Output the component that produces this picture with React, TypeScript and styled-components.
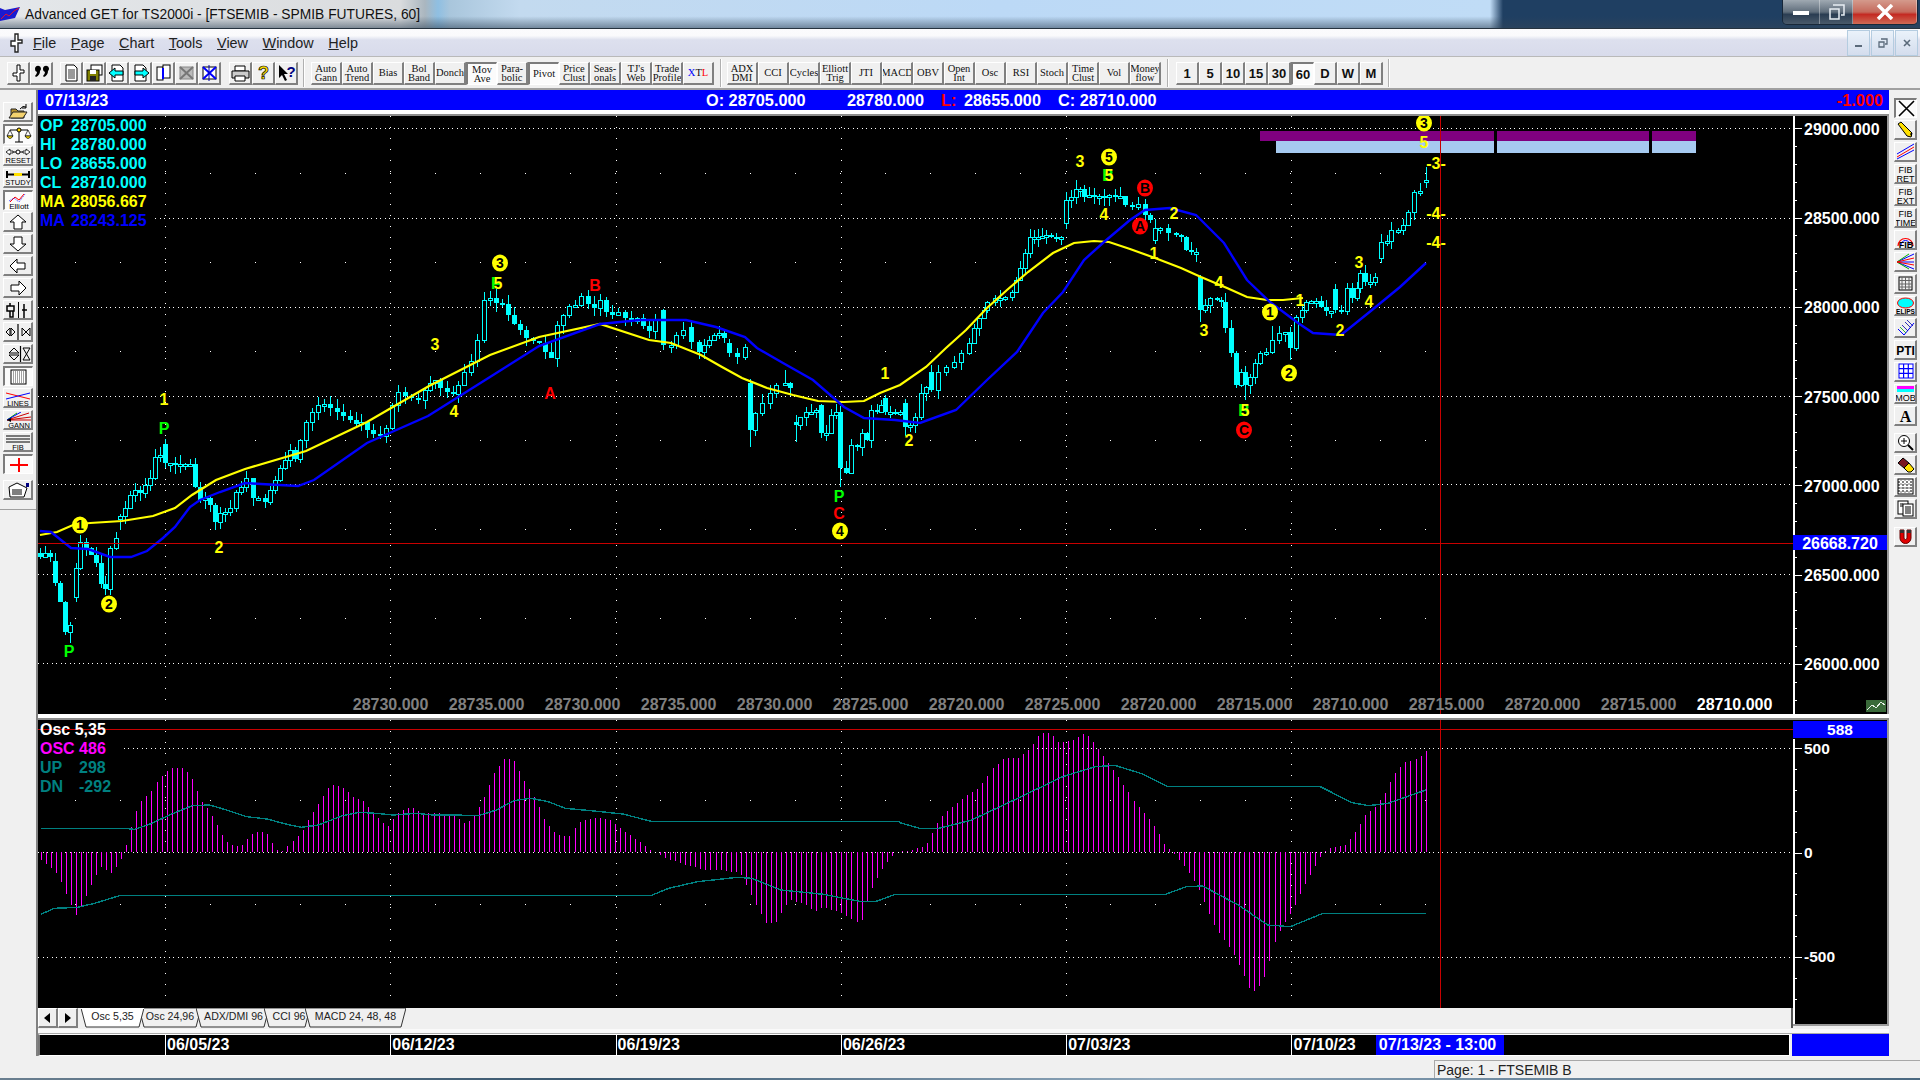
import React from 'react';
import styled, { createGlobalStyle } from 'styled-components';

const Global = createGlobalStyle`
  html, body { margin: 0; padding: 0; background: #f0f0f0; overflow: hidden; }
  * { box-sizing: border-box; }
  svg { display: block; }
  svg text { font-family: "Liberation Sans", Arial, sans-serif; }
`;

const SANS = '"Liberation Sans", Arial, sans-serif';
const SERIF = '"Liberation Serif", "Times New Roman", serif';

/* ---------- page frame ---------- */
const Page = styled.div`
  width: 1920px; height: 1080px; display: flex; flex-direction: column;
  font-family: ${SANS}; background: #f0f0f0; overflow: hidden;
`;
const TitleBar = styled.header`
  height: 29px; flex: none; display: flex; align-items: flex-start; justify-content: space-between;
  border-bottom: 1px solid #26333f;
  background:
    linear-gradient(180deg, rgba(40,60,80,0) 58%, rgba(50,70,90,.55) 100%),
    linear-gradient(90deg, #e4e7ea 0, #dadcde 400px, #aab6bf 425px, #8fbfe2 438px, #a9c6dc 450px, #c3daef 520px, #bcd9f6 1000px, #c0dcf6 1490px, #1f3f62 1503px, #1f3f62 1920px);
`;
const TitleLeft = styled.div`display: flex; align-items: center; height: 28px; gap: 4px; padding-left: 0;`;
const TitleText = styled.span`font-size: 13.8px; color: #111; white-space: nowrap;`;
const WinControls = styled.div`
  display: flex; height: 25px; margin-right: 2px; border: 1px solid rgba(20,30,40,.7); border-top: 0;
  border-radius: 0 0 5px 5px; overflow: hidden;
`;
const WinBtn = styled.div<{ $w: number; $close?: boolean }>`
  width: ${p => p.$w}px; display: flex; align-items: center; justify-content: center;
  border-right: 1px solid rgba(255,255,255,.35);
  background: ${p => p.$close
    ? 'linear-gradient(180deg, #d49a8c 0, #c56a5c 50%, #c42a22 60%, #cf6a55 100%)'
    : 'linear-gradient(180deg, #9fa9b2 0, #5f6d7b 50%, #2a3d52 60%, #4a5a6a 100%)'};
`;
const MenuBar = styled.nav`
  height: 28px; flex: none; display: flex; align-items: center; padding-left: 8px;
  background: linear-gradient(180deg, #fbfbfd 0, #fafafc 25%, #dde0ee 40%, #d8dbeb 100%);
  border-bottom: 1px solid #b9b9b9; position: relative;
`;
const MenuItems = styled.div`display: flex; gap: 14.6px; margin-left: 6px;`;
const MenuItem = styled.span`font-size: 14.4px; color: #222; white-space: nowrap;`;
const MenuKey = styled.span`text-decoration: underline;`;
const MdiControls = styled.div`margin-left: auto; margin-right: 2px; display: flex; gap: 1px; align-self: flex-start; margin-top: 1px;`;
const MdiBtn = styled.div`
  width: 23px; height: 26px; display: flex; align-items: center; justify-content: center;
  background: linear-gradient(180deg, #eaf2fa, #d4dded); border: 1px solid #b4cce0;
`;
const ToolBar = styled.div`
  height: 33px; flex: none; display: flex; align-items: flex-start; padding: 5px 0 0 7px; background: #f0f0f0;
  border-bottom: 2px solid #a0a0a0;
`;
const Group = styled.div<{ $ml?: number }>`display: flex; margin-left: ${p => p.$ml ?? 0}px;`;
const Sep = styled.div<{ $ml: number; $mr?: number }>`
  width: 2px; height: 28px; margin: -3px ${p => p.$mr ?? 0}px 0 ${p => p.$ml}px;
  border-left: 1px solid #b0b0b0; border-right: 1px solid #fff;
`;
const bevel = (pressed?: boolean) => pressed
  ? `background: #fbfbfb; border-top: 2px solid #7c7c7c; border-left: 2px solid #7c7c7c; border-bottom: 1px solid #fff; border-right: 1px solid #fff;`
  : `background: #f0f0f0; border-top: 1px solid #fff; border-left: 1px solid #fff; border-bottom: 2px solid #808080; border-right: 2px solid #808080;`;
const TBtn = styled.div<{ $w: number; $on?: boolean }>`
  width: ${p => p.$w}px; height: 23px; flex: none; display: flex; align-items: center; justify-content: center;
  ${p => bevel(p.$on)}
  font-family: ${SERIF}; font-size: 10.5px; line-height: 9.5px; color: #111; text-align: center; white-space: pre-line; overflow: hidden;
`;
const NumBtn = styled(TBtn)`font-family: ${SANS}; font-size: 13px; font-weight: bold; line-height: 13px; color: #111;`;
const Blue = styled.span`color: #0000ff;`;
const Red = styled.span`color: #ff0000;`;

const Body = styled.main`height: 966px; flex: none; display: flex;`;
const LeftTools = styled.aside`
  width: 38px; flex: none; display: flex; flex-direction: column; gap: 2px; padding: 12px 0 0 3px; background: #f0f0f0;
  border-right: 2px solid #808080; position: relative;
`;
const SideBtn = styled.div<{ $on?: boolean; $mt?: number; $w: number }>`
  width: ${p => p.$w}px; height: 20px; flex: none; display: flex; align-items: center; justify-content: center;
  margin-top: ${p => p.$mt ?? 0}px; ${p => bevel(p.$on)}
`;
const LeftDivider = styled.div`width: 36px; height: 1px; background: #a0a0a0; margin: 7px 0 0 -3px; flex: none;`;
const Center = styled.section`width: 1851px; flex: none; display: flex; flex-direction: column;`;
const RightTools = styled.aside`
  width: 31px; flex: none; display: flex; flex-direction: column; gap: 2px; padding: 8px 0 0 5px; background: #f0f0f0;
`;
const InfoBar = styled.div`
  height: 20px; flex: none; display: flex; align-items: center; background: #0000ff; color: #fff;
  font-size: 16.3px; font-weight: bold; padding: 1px 6px 0 7px; white-space: nowrap;
`;
const InfoItem = styled.span<{ $w: number }>`width: ${p => p.$w}px; flex: none;`;
const InfoEnd = styled.span`margin-left: auto; color: #ff0000;`;
const Rule = styled.div`
  height: 6px; flex: none; background: #fff; border-bottom: 2px solid #8c8c8c;
`;
const ChartRow = styled.div`height: 598px; flex: none; display: flex; background: #000; border-right: 2px solid #9a9a9a;`;
const Plot = styled.div`width: 1755px; flex: none; position: relative; background: #000;`;
const Legend = styled.div<{ $w: number }>`
  position: absolute; left: 0; top: 0; width: ${p => p.$w}px; padding: 0;
  display: flex; flex-direction: column; font-size: 16px; font-weight: bold; white-space: pre;
`;
const LegendRow = styled.div<{ $c: string; $clear?: boolean }>`
  height: 19px; line-height: 19px; color: ${p => p.$c}; display: flex; padding-left: 2px;
  background: ${p => p.$clear ? 'transparent' : '#000'};
`;
const LegendKey = styled.span<{ $w: number }>`width: ${p => p.$w}px; flex: none;`;
const LowerRow = styled.div`height: 308px; flex: none; display: flex; background: #f0f0f0;`;
const LowerLeft = styled.div`width: 1755px; flex: none; display: flex; flex-direction: column;`;
const OscPlot = styled.div`height: 288px; flex: none; position: relative; background: #000;`;
const TabRow = styled.div`height: 20px; flex: none; display: flex; background: #f0f0f0; border-right: 2px solid #555;`;
const ScrollBtn = styled.div`
  width: 20px; height: 20px; flex: none; display: flex; align-items: center; justify-content: center; ${bevel(false)}
`;
const TabList = styled.div`display: flex; margin-left: 3px;`;
const Tab = styled.div<{ $w: number; $on?: boolean }>`
  width: ${p => p.$w + 5}px; margin-right: -5px; height: 20px; position: relative; z-index: ${p => p.$on ? 2 : 1};
  display: flex; justify-content: center; font-size: 10.6px; line-height: 16px; color: #222; white-space: nowrap;
`;
const TabShape = styled.svg`position: absolute; left: 0; top: 0;`;
const TabLabel = styled.span<{ $pl: number }>`position: relative; padding-top: 0; padding-left: ${p => p.$pl}px;`;
const AxisCol = styled.div`width: 96px; flex: none; background: #000; border-right: 2px solid #9a9a9a; border-bottom: 2px solid #9a9a9a; height: 306px;`;
const Gap = styled.div`height: 5px; flex: none; background: #fafafa; border-bottom: 1px solid #aaa; margin-top: 1px;`;
const DateRow = styled.div`height: 22px; flex: none; display: flex; justify-content: space-between;`;
const DateBar = styled.div`
  width: 1752px; flex: none; display: flex; background: #000; border: 1px solid #fff; border-left: 2px solid #777; outline: 0;
  color: #fff; font-size: 16px; font-weight: bold; line-height: 20px; overflow: hidden;
`;
const DatePad = styled.div`width: 125px; flex: none;`;
const DateCell = styled.div<{ $w: number }>`width: ${p => p.$w}px; flex: none; border-left: 1px solid #fff; padding-left: 1px; display: flex;`;
const CursorLabel = styled.span`margin-left: 20px; background: #0000ff; padding: 0 3px; width: 128px; white-space: nowrap;`;
const DateEnd = styled.div`width: 97px; flex: none; background: #0000ff;`;
const StatusRow = styled.footer`flex: none; height: 22px; display: flex; justify-content: flex-end; background: #f0f0f0; padding-top: 4px;`;
const StatusPanel = styled.div`
  width: 486px; height: 18px; border-top: 1px solid #a8a8a8; border-left: 1px solid #a8a8a8; padding-left: 2px;
  font-size: 14px; line-height: 18px; color: #222; white-space: nowrap;
`;
const BottomStrip = styled.div`flex: none; height: 2px; background: linear-gradient(90deg, #6a7f90, #3a5870 30%, #90a8bc 60%, #4a6880);`;

/* ---------- chart data ---------- */
type P = [number, number];
const Y_OF = (v: number) => 128.3 + (29000 - v) * 0.1785;

const raw: [number, number, number?][] = [
[40,557,553],[45,553],[50,557],[55,583,561],[60,602],[65,632],[70,625],[75.5,568,597],[80,542],[86,548],[90.6,555],[96,563],[101,584],[105,589],[110,548],[115.5,538],
[120,516,519],[125,508],[130,495],[135,490],[140,493],[145,485],[150,478],[155,457],[160,455],[165,463,444],[170,463],[175,464],[180,464],[185,464],[190,464],[195,487],[200,500],[205,498],[210,505],[215,522],[220,513],[225,512],[230,508],[236,492],[241,487],[246,478],[253,498],[258,498],[265,502],[270,490],[275,480],[280,468],[285,460],[290,450],[295,459],[300,440],[306,422],[312,412],[318,405],[324,404],[330,408],[337,412],[343,416],[350,420],[356,424],[361,422],[367,430],[373,434],[380,436],[386,428],[392,405],[398,392],[405,396],[411,398],[418,400],[425,390],[430,383],[435,380],[440,388],[447,392],[453,394],[458,385],[464,372],[471,361],[477,340],[484,300],[490,298],[496,303],[502,304],[508,315],[514,324],[520,330],[526,338],[533,341],[539,343],[545,352],[551,358],[557,325],[563,315],[569,306],[575,305],[581,296],[588,304],[594,308],[600,300],[606,312],[612,315],[618,312],[625,318],[631,321],[637,318],[643,326],[649,331],[655,320],[663,345,310],[670.6,345],[676,335],[683,330],[691,342,327],[699,352],[704,345],[709,340],[714,335],[719,333],[724,338],[729,353,343],[737,357],[745,347],
[750,430,383],[755,413],[762,403],[770,393],[776,385],[785,383],[790,388],[795.6,425,422],[800,417],[806,412],[811,412],[816,410],[821,433,405],[826,433],[831,415],[836,412],[840,468],[846,473],[851,445],[857,447],[862,433],[867,440],[871,410],[877,412],[881,405],[885,412,398],[890,412],[895,413],[900,412],[905,427,403],[910,425],[915,417],[921,393],[926,387],[931,390,372],[938,372],[946,367],[954,362],[961,353],[969,343],[974,328],[979,318],[984,310],[987,302],[995,298],[1000,298],[1005,297],[1012,292],[1016,280],[1020,268],[1025,253],[1030,237],[1034,237],[1038,237],[1042,236],[1046,235],[1051,237],[1056,238],[1061,237],
[1066,200,223],[1071,197],[1076,189],[1080,189],[1084,197],[1089,195],[1094,197],[1099,196],[1104,197],[1109,195],[1115,197],[1120,196],[1125,205],[1132,207],[1138,204],[1145,215],[1150,220],
[1155,228,240],[1160,228],[1168,233],[1176,235],[1181,237],[1186,250],[1191,252],[1196,252],
[1200,310,277],[1205,305],[1210,298],[1217,300],[1221,302],[1225,328],[1231,353],[1236,385],[1241,372],[1245,385],[1250,377],[1255,363],[1260,353],[1266,352],[1272,340],[1279,333],[1285,332],[1290,348],[1296,317],[1302,310],[1306,302],[1311,301],[1316,301],[1321,307],[1326,311],[1331,311],[1335,310,289],[1341,311],[1347,288],[1352,298],[1357,288],[1360,273],[1365,282],[1370,282],[1375,277],
[1381,242,258],[1387,241],[1391,230],[1398,230],[1403,225],[1408,212],[1414,192],[1420,191],[1426,180,181]];

const wickOver: Record<number, [number?, number?]> = {
  70:[, 643], 165:[439], 750:[, 447], 785:[370], 795.6:[, 442], 840:[, 487], 1245:[, 400], 1290:[, 360],
  1426:[167, 188], 1381:[, 263], 921:[, 420], 1272:[326], 110:[, 595], 75.5:[, 602], 120:[, 530], 1200:[, 322], 1016:[, 280],
};
const hash = (n: number) => { const s = Math.sin(n * 12.9898) * 43758.5453; return s - Math.floor(s); };
const bars = raw.map((r, i) => {
  const open = r[2] ?? (i ? raw[i - 1][1] : r[1]);
  const close = r[1];
  let top = Math.min(open, close), bot = Math.max(open, close);
  if (bot - top < 2) bot = top + 2;
  const o = wickOver[r[0]] || [];
  const wt = o[0] ?? top - Math.round(hash(r[0]) * 9);
  const wb = o[1] ?? bot + Math.round(hash(r[0] + 3) * 9);
  return { x: Math.round(r[0]), top, bot, filled: close > open, wt, wb };
});

const yellowMa: P[] = [[40,535],[57,532],[73,525],[90,523],[122,521],[153,516],[175,508],[192,495],[216,480],[245,469],[306,451],[367,422],[429,386],[490,355],[539,337],[600,324],[649,340],[671,343],[701,355],[722,367],[742,378],[767,388],[793,395],[818,401],[844,402],[864,401],[880,393],[900,385],[926,367],[946,348],[966,330],[987,308],[1007,290],[1028,272],[1053,253],[1074,243],[1094,241],[1109,242],[1130,249],[1155,258],[1181,268],[1201,277],[1227,288],[1247,297],[1267,300],[1283,300],[1303,298]];
const blueMa: P[] = [[40,531],[51,532],[61,540],[71,548],[88,549],[110,557],[131,557],[147,551],[163,538],[175,527],[190,507],[200,500],[220,492],[245,483],[261,484],[298,486],[314,480],[367,443],[428,416],[490,377],[539,346],[600,324],[640,320],[686,320],[716,327],[745,337],[757,348],[783,363],[813,380],[844,407],[864,418],[895,420],[920,423],[956,410],[987,380],[1017,352],[1043,313],[1063,292],[1084,260],[1104,242],[1130,220],[1145,210],[1170,208],[1196,215],[1224,243],[1247,280],[1270,302],[1298,323],[1313,333],[1341,335],[1372,310],[1400,287],[1426,263]];

const z11 = (a: P[]): P[] => a.map(([x, y]) => [x / 1.742 + 20, y / 3 + 710]);
const z12 = (a: P[]): P[] => a.map(([x, y]) => [x / 1.537 + 900, y / 3 + 710]);
const histo: P[] = [
  ...z11([[36,450],[60,480],[70,510],[80,550],[97,615],[110,580],[122,530],[140,470],[160,490],[175,450],[184,410],[192,360],[200,310],[210,275],[225,250],[245,200],[262,175],[280,172],[297,195],[315,270],[330,305],[340,335],[350,370],[365,405],[385,410],[400,375],[415,365],[430,370],[445,420],[455,425],[470,400],[490,370],[505,320],[525,265],[540,225],[560,230],[580,260],[600,275],[615,310],[630,335],[640,350],[660,305],[680,290],[700,310],[730,310],[760,320],[775,340],[785,330],[800,290],[810,255],[825,190],[845,142],[860,150],[880,220],[900,275],[915,335],[935,375],[955,380],[975,335],[1000,322],[1030,332],[1050,360],[1075,390],[1095,418],[1105,425],[1125,445],[1160,465],[1195,480],[1225,480],[1255,490],[1280,580],[1300,640],[1315,640],[1340,570],[1365,580],[1385,605],[1400,590],[1430,610],[1450,630],[1465,640],[1480,550],[1500,480],[1520,435],[1535,420]]),
  ...z12([[0,425],[20,420],[40,405],[60,325],[80,290],[100,260],[120,235],[140,180],[160,145],[180,145],[200,115],[215,70],[230,68],[245,100],[265,90],[285,68],[300,105],[320,160],[345,230],[360,275],[380,320],[395,360],[408,410],[420,428],[440,475],[460,540],[470,590],[485,655],[500,695],[515,740],[525,780],[540,850],[553,825],[562,790],[575,700],[590,640],[605,595],[620,530],[640,460],[650,428],[660,415],[685,405],[700,365],[715,315],[730,290],[745,250],[760,190],[775,155],[790,150],[800,140],[808,122]]),
];
const tealUp: P[] = [
  ...z11([[36,355],[180,355],[200,358],[230,340],[260,315],[300,287],[330,285],[360,300],[395,320],[430,327],[470,345],[490,352],[520,345],[560,318],[590,307],[620,310],[650,315],[690,310],[720,315],[800,316],[830,300],[860,272],[890,265],[920,275],[950,295],[1000,303],[1050,312],[1100,334],[1530,334]]),
  ...z12([[0,338],[30,355],[60,355],[110,330],[170,275],[250,200],[300,170],[330,166],[370,190],[410,229],[645,229],[695,278],[720,287],[750,280],[808,240]]),
];
const tealDn: P[] = [
  ...z11([[36,613],[60,595],[100,592],[130,580],[175,556],[1100,556],[1130,535],[1180,515],[1250,502],[1275,505],[1325,540],[1400,553],[1465,575],[1490,575],[1525,553],[1535,553]]),
  ...z12([[0,553],[408,553],[440,530],[465,528],[520,585],[565,645],[600,650],[650,610],[808,610]]),
];
const interp = (a: P[], x: number) => {
  for (let i = 1; i < a.length; i++) if (x <= a[i][0]) {
    const [x0, y0] = a[i - 1], [x1, y1] = a[i];
    return y0 + (y1 - y0) * (x - x0) / (x1 - x0 || 1);
  }
  return a[a.length - 1][1];
};
const pts = (a: P[]) => a.map(p => p.join(',')).join(' ');

const WEEKS = [165, 390, 616, 841, 1066, 1291];
const DOTX = Array.from({ length: 31 }, (_, i) => 75 + i * 45);

const gridPath = (ys: number[]) => ys.map(y => DOTX.map(x => `M${x} ${Math.round(y)}h1`).join('')).join('');

/* ---------- chart labels ---------- */
type L = [number, number, string, string];
const Y = '#ffff00', G = '#00ff00', R = '#ff0000';
const labels: L[] = [
  [164,399,'1',Y],[164,428,'P',G],[69,651,'P',G],[219,547,'2',Y],[435,344,'3',Y],[454,411,'4',Y],[496,283,'F',G],[498,283,'5',Y],
  [550,393,'A',R],[595,285,'B',R],[885,373,'1',Y],[909,440,'2',Y],[839,496,'P',G],[839,513,'C',R],[1080,161,'3',Y],
  [1108,175,'B',G],[1109,175,'5',Y],[1104,214,'4',Y],[1174,213,'2',Y],[1154,253,'1',Y],[1219,282,'4',Y],[1204,330,'3',Y],
  [1244,410,'B',G],[1245,410,'5',Y],[1300,300,'1',Y],[1340,330,'2',Y],[1359,262,'3',Y],[1369,301,'4',Y],[1424,142,'5',Y],
  [1436,163,'-3-',Y],[1436,213,'-4-',Y],[1436,242,'-4-',Y],
];
const circles: L[] = [
  [80,525,'1',Y],[109,604,'2',Y],[500,263,'3',Y],[840,531,'4',Y],[1109,157,'5',Y],[1145,188,'B',R],[1140,226,'A',R],[1244,430,'C',R],
  [1270,312,'1',Y],[1289,373,'2',Y],[1424,123,'3',Y],
];
const bottomVals = ['28730.000','28735.000','28730.000','28735.000','28730.000','28725.000','28720.000','28725.000','28720.000','28715.000','28710.000','28715.000','28720.000','28715.000','28710.000'];

const MainChart = () => (
  <svg width={1755} height={598} viewBox="38 116 1755 598">
    <g stroke="#fff" strokeWidth={1} shapeRendering="crispEdges">
      {[128, 218, 307, 396, 484, 574, 663].map(y => <line key={y} x1={38} x2={1793} y1={y + .5} y2={y + .5} strokeDasharray="1 3.5" />)}
      {WEEKS.map(x => <line key={x} x1={x + .5} x2={x + .5} y1={116} y2={700} strokeDasharray="1 10" />)}
      <path d={gridPath([173, 262, 351, 440, 529, 618])} />
    </g>
    <g shapeRendering="crispEdges">
      <rect x={1260} y={131} width={436} height={10} fill="#800080" />
      <rect x={1276} y={141} width={420} height={12} fill="#a6caf0" />
      <rect x={1494} y={131} width={3} height={22} fill="#000" />
      <rect x={1649} y={131} width={3} height={22} fill="#000" />
    </g>
    <g shapeRendering="crispEdges">
      {bars.map((b, i) => (
        <g key={i}>
          <line x1={b.x + .5} x2={b.x + .5} y1={b.wt} y2={b.wb} stroke="#00ffff" />
          {b.filled
            ? <rect x={b.x - 2} y={b.top} width={5} height={b.bot - b.top} fill="#00ffff" />
            : <rect x={b.x - 1.5} y={b.top + .5} width={4} height={b.bot - b.top} fill="#000" stroke="#00ffff" />}
        </g>
      ))}
    </g>
    <polyline points={pts(yellowMa)} fill="none" stroke="#ffff00" strokeWidth={2.2} />
    <polyline points={pts(blueMa)} fill="none" stroke="#0000ff" strokeWidth={2.4} />
    <g shapeRendering="crispEdges">
      <line x1={38} x2={1793} y1={543.5} y2={543.5} stroke="#c80000" />
      <line x1={1440.5} x2={1440.5} y1={116} y2={714} stroke="#c80000" />
    </g>
    <g fontSize={16} fontWeight="bold" textAnchor="middle" dominantBaseline="central">
      {circles.map(([x, y, t, c], i) => (
        <g key={i}>
          <ellipse cx={x} cy={y} rx={8} ry={8.6} fill={c} />
          <text x={x} y={y} fill="#000" fontSize={14}>{t}</text>
        </g>
      ))}
      {labels.map(([x, y, t, c], i) => <text key={i} x={x} y={y} fill={c}>{t}</text>)}
    </g>
    <g fontSize={16} fontWeight="bold" textAnchor="middle">
      {bottomVals.map((t, i) => (
        <text key={i} x={390.6 + i * 96} y={710} fill={i === 14 ? '#fff' : '#808080'}>{t}</text>
      ))}
    </g>
  </svg>
);

const MainAxis = () => {
  const ticks = Array.from({ length: 34 }, (_, i) => 128.3 + i * 17.85);
  return (
    <svg width={94} height={598} viewBox="1793 116 94 598">
      <g stroke="#fff" shapeRendering="crispEdges">
        <rect x={1793} y={116} width={2} height={598} fill="#fff" stroke="none" />
        {ticks.map((y, i) => <line key={i} x1={1794} x2={i % 5 === 0 ? 1802 : 1797} y1={Math.round(y) + .5} y2={Math.round(y) + .5} />)}
      </g>
      <g fontSize={16} fontWeight="bold" fill="#fff" dominantBaseline="central">
        {[29000, 28500, 28000, 27500, 27000, 26500, 26000].map(v => (
          <text key={v} x={1804} y={Y_OF(v) + 1}>{v}.000</text>
        ))}
      </g>
      <rect x={1793} y={535} width={94} height={15} fill="#0000ff" />
      <text x={1840} y={543} fontSize={16} fontWeight="bold" fill="#fff" textAnchor="middle" dominantBaseline="central">26668.720</text>
      <g shapeRendering="crispEdges">
        <rect x={1866} y={700} width={20} height={12} fill="#3a6a3a" />
        <path d="M1867 710l5-5 4 3 5-6 4 3" stroke="#e8f0e8" fill="none" />
      </g>
    </svg>
  );
};

const OscChart = () => {
  const n = 275;
  const xs = Array.from({ length: n + 1 }, (_, i) => Math.round(40.7 + i * 5.036));
  return (
    <svg width={1755} height={288} viewBox="38 720 1755 288">
      <g stroke="#fff" shapeRendering="crispEdges">
        {[748, 852, 957].map(y => <line key={y} x1={38} x2={1793} y1={y + .5} y2={y + .5} strokeDasharray="1 3.5" />)}
        {WEEKS.map(x => <line key={x} x1={x + .5} x2={x + .5} y1={720} y2={1006} strokeDasharray="1 10" />)}
        <path d={gridPath([800, 904])} />
      </g>
      <g stroke="#ff00ff" shapeRendering="crispEdges">
        {xs.map(x => <line key={x} x1={x + .5} x2={x + .5} y1={852} y2={Math.round(interp(histo, x))} />)}
      </g>
      <g fill="none" stroke="#008080" strokeWidth={1.4} shapeRendering="crispEdges">
        <polyline points={pts(tealUp)} />
        <polyline points={pts(tealDn)} />
      </g>
      <g shapeRendering="crispEdges" stroke="#c80000">
        <line x1={38} x2={1793} y1={729.5} y2={729.5} />
        <line x1={1440.5} x2={1440.5} y1={720} y2={1008} />
      </g>
    </svg>
  );
};

const OscAxis = () => (
  <svg width={94} height={304} viewBox="1793 720 94 304">
    <rect x={1793} y={721} width={94} height={17} fill="#0000ff" />
    <text x={1840} y={729} fontSize={15.5} fontWeight="bold" fill="#fff" textAnchor="middle" dominantBaseline="central">588</text>
    <g stroke="#fff" shapeRendering="crispEdges">
      <rect x={1793} y={739} width={2} height={285} fill="#fff" stroke="none" />
      {Array.from({ length: 13 }, (_, i) => 748 + i * 20.9).map((y, i) => (
        <line key={i} x1={1794} x2={i % 5 === 0 ? 1802 : 1797} y1={Math.round(y) + .5} y2={Math.round(y) + .5} />
      ))}
    </g>
    <g fontSize={15.5} fontWeight="bold" fill="#fff" dominantBaseline="central">
      <text x={1804} y={748}>500</text>
      <text x={1804} y={852}>0</text>
      <text x={1804} y={956}>-500</text>
    </g>
  </svg>
);

/* ---------- icons ---------- */
const Ic = ({ w = 26, h = 16, children }: { w?: number; h?: number; children: React.ReactNode }) => (
  <svg width={w} height={h} viewBox={`0 0 ${w} ${h}`}>{children}</svg>
);
const Tx = ({ x, y, s = 7, b, c = '#000', ls, children }: { x: number; y: number; s?: number; b?: boolean; c?: string; ls?: number; children: React.ReactNode }) => (
  <text x={x} y={y} fontSize={s} fontWeight={b ? 'bold' : 'normal'} fill={c} textAnchor="middle" letterSpacing={ls}>{children}</text>
);
const arrow = (d: string) => <Ic><path d={d} fill="#fff" stroke="#000" strokeWidth={1} /></Ic>;

const leftIcons: React.ReactNode[] = [
  <Ic><path d="M6 14V5h5l2 2h6v7z" fill="#b8922c" stroke="#222" /><path d="M4 14l4-6h14l-4 6z" fill="#f4d26e" stroke="#222" /><path d="M15 5q3-4 6-2M21 0v4h-4" fill="none" stroke="#000" /></Ic>,
  <Ic><path d="M13 2v13M9 15h8M4 3h18" stroke="#000" fill="none" /><circle cx={13} cy={3} r={2} fill="#ffd800" stroke="#000" /><path d="M1 9l3-6 3 6zM19 9l3-6 3 6z" fill="none" stroke="#000" strokeWidth={.7} /><path d="M1 9h6q-3 5-6 0zM19 9h6q-3 5-6 0z" fill="#ffe000" stroke="#000" strokeWidth={.7} /></Ic>,
  <Ic><path d="M1 4l4-3v2h3v2H5v2zM25 4l-4-3v2h-3v2h3v2z" fill="#fff" stroke="#000" strokeWidth={.8} /><circle cx={13} cy={4} r={2} fill="#fff" stroke="#000" /><path d="M8 4h3M15 4h3" stroke="#000" /><Tx x={13} y={15} s={7.5}>RESET</Tx></Ic>,
  <Ic><path d="M2 1v7M24 1v7" stroke="#000" strokeWidth={2} /><path d="M2 4.5h22" stroke="#000" strokeWidth={2} /><rect x={9} y={3} width={8} height={3} fill="#ffe000" /><Tx x={13} y={15} s={7.5}>STUDY</Tx></Ic>,
  <Ic><path d="M4 9l5-5 4 3 5-6" fill="none" stroke="#f00" /><path d="M3 8l5-3 5 4 6-8" fill="none" stroke="#00f" strokeWidth={.6} strokeDasharray="2 1" /><Tx x={13} y={15.5} s={8}>Elliott</Tx></Ic>,
  arrow('M13 1l8 7h-4v7H9V8H5z'),
  arrow('M13 15l8-7h-4V1H9v7H5z'),
  arrow('M5 8l7-7v4h8v6h-8v4z'),
  arrow('M21 8l-7-7v4H6v6h8v4z'),
  <Ic><path d="M5 1v3H2v5h3M5 4h4v5H5v6h3V9" fill="none" stroke="#000" strokeWidth={1.5} /><path d="M13.5 0v16" stroke="#000" /><path d="M19 2v14M17 8h5" stroke="#000" strokeWidth={1.5} /></Ic>,
  <Ic><path d="M1 8l4-4v8zM6 4l4 4-4 4zM17 4v8l4-4zM25 4v8l-4-4z" fill="none" stroke="#000" /><path d="M13 0v16" stroke="#000" strokeWidth={1.2} /></Ic>,
  <Ic><path d="M4 7l5-5 5 5zM4 9l5 5 5-5z" fill="none" stroke="#000" /><path d="M15.5 0v16" stroke="#000" strokeWidth={1.2} /><path d="M18 2h7l-7 12h7z" fill="none" stroke="#000" /></Ic>,
  <Ic><rect x={5} y={1} width={15} height={14} fill="#fff" stroke="#000" /><path d="M7 3h11M7 5h11M7 7h11M7 9h11M7 11h11M7 13h11" stroke="#444" strokeDasharray="1 1" /></Ic>,
  <Ic><path d="M1 3l24 6" stroke="#f00" /><path d="M1 9l24-6" stroke="#00f" /><Tx x={13} y={15.5} s={7.5}>LINES</Tx></Ic>,
  <Ic><path d="M2 8L24 1M2 8l24-3M2 8h24" stroke="#c00" /><path d="M2 8L12 1" stroke="#0a0" /><path d="M2 8l14-8" stroke="#00f" /><path d="M2 8l4-2v4z" fill="#000" /><Tx x={14} y={15.5} s={7.5}>GANN</Tx></Ic>,
  <Ic><path d="M1 2h24M1 5h24M1 8h24" stroke="#000" /><Tx x={13} y={15.5} s={7.5}>FIB</Tx></Ic>,
  <Ic><path d="M4 8h18M13 1v14" stroke="#f00" strokeWidth={2} /></Ic>,
  <Ic><path d="M4 5l8-4 10 5-3 9H5z" fill="#fff" stroke="#000" /><path d="M7 8h10M7 10h10M7 12h10" stroke="#000" /><path d="M21 1h3v4h-3z" fill="#000080" /></Ic>,
];
const Rt = ({ children }: { children: React.ReactNode }) => <Ic w={19} h={17}>{children}</Ic>;
const rightFib = (a: string, b: string) => <Rt><Tx x={9.5} y={8} s={9}>{a}</Tx><Tx x={9.5} y={16.5} s={9}>{b}</Tx></Rt>;
const rightIcons: React.ReactNode[] = [
  <Rt><path d="M2 1l15 15M17 1L2 16" stroke="#000" strokeWidth={1.6} /></Rt>,
  <Rt><path d="M2 3l3-2 11 11-1 4-4-1z" fill="#ffe000" stroke="#000" /><path d="M14 13l2-2 0 5z" fill="#000" /></Rt>,
  <Rt><path d="M1 14L18 4" stroke="#f00" /><path d="M1 11L18 1" stroke="#00f" /><path d="M1 16L18 7" stroke="#00f" /></Rt>,
  rightFib('FIB', 'RET'), rightFib('FIB', 'EXT'), rightFib('FIB', 'TIME'),
  <Rt><path d="M2 15a7.5 7.5 0 0 1 15 0" fill="none" stroke="#f00" strokeWidth={1.2} /><path d="M5 14a4.5 4.5 0 0 1 9 0" fill="none" stroke="#00f" /><Tx x={10} y={16.5} s={9} b>FIB</Tx></Rt>,
  <Rt><path d="M1 9L18 1M1 9l17 7M1 9h17" stroke="#00f" /><path d="M1 9l12-8M1 9l12 7" stroke="#0a0" /><path d="M1 9l17-4M1 9l17 3" stroke="#f00" /></Rt>,
  <Rt><rect x={3} y={2} width={13} height={13} fill="none" stroke="#000" /><path d="M6 2v13M9.5 2v13M13 2v13M3 5.5h13M3 9h13M3 12h13" stroke="#666" /></Rt>,
  <Rt><ellipse cx={9.5} cy={6} rx={8} ry={5} fill="#00ffff" stroke="#f00" /><Tx x={9.5} y={16.5} s={6.5} b>ELIPS</Tx></Rt>,
  <Rt><path d="M2 10l6 6L18 4" fill="none" stroke="#00f" /><path d="M6 6l6 6M9 3l6 6M11 1l6 6" stroke="#00a" strokeWidth={.8} /><path d="M4 8l6 6" stroke="#0a0" strokeWidth={.8} /></Rt>,
  <Rt><Tx x={9.5} y={14} s={12} b>PTI</Tx></Rt>,
  <Rt><rect x={3} y={1} width={14} height={14} fill="#fff" stroke="#00f" /><path d="M7.6 1v14M12.3 1v14M3 5.6h14M3 10.3h14" stroke="#00f" strokeWidth={1.2} /></Rt>,
  <Rt><rect x={1} y={1} width={17} height={3} fill="#ff00ff" /><rect x={1} y={4} width={17} height={3} fill="#00ffff" /><Tx x={9.5} y={16} s={9}>MOB</Tx></Rt>,
  <Rt><text x={9.5} y={15} fontSize={16} fontWeight="bold" textAnchor="middle" style={{ fontFamily: SERIF }}>A</text></Rt>,
  <Rt><circle cx={8} cy={7} r={5.5} fill="#fff" stroke="#000" /><path d="M5 7h6M8 4v6" stroke="#000" /><path d="M12 11l5 5" stroke="#000" strokeWidth={2} /></Rt>,
  <Rt><path d="M2 7l5-5 6 5-5 5z" fill="#7a1820" stroke="#000" /><path d="M8 12l5-5 5 6-3 3h-3z" fill="#ffe000" stroke="#000" /></Rt>,
  <Rt><rect x={2} y={1} width={15} height={15} fill="#fff" stroke="#000" /><path d="M2 4h15M2 7h15M2 10h15M2 13h15" stroke="#000" strokeDasharray="2 2" /><path d="M5 1v15M9 1v15M13 1v15" stroke="#777" strokeDasharray="2 2" /></Rt>,
  <Rt><rect x={2} y={1} width={10} height={13} fill="#fff" stroke="#000" /><rect x={7} y={4} width={10} height={12} fill="#fff" stroke="#000" /><path d="M9 7h6M9 9h6M9 11h6M9 13h6M4 4h3M4 6h3" stroke="#000" /></Rt>,
  <Rt><path d="M4 2v8a5.5 5.5 0 0 0 11 0V2h-4v8a1.5 1.5 0 0 1-3 0V2z" fill="#e00000" stroke="#600" /><path d="M4 2h4v3H4zM11 2h4v3h-4z" fill="#333" /></Rt>,
];
const Ti = ({ children }: { children: React.ReactNode }) => <Ic w={19} h={18}>{children}</Ic>;
const crossIcon = <path d="M8 1h3v5h4v3h-4v8H8v-5H4V9h4z" fill="#fff" stroke="#000" />;
const docIcon = <path d="M4 1h8l3 3v13H4z" fill="#fff" stroke="#000" />;
const quoteMark = 'M3 5a3 3 0 1 1 5 2q0 4-4 6l-1-1q2-2 2-4a3 3 0 0 1-2-3z';
const topIcons: React.ReactNode[][] = [
  [
    <Ti>{crossIcon}</Ti>,
    <Ti><path d={quoteMark} fill="#000" /><path d={quoteMark} transform="translate(8 0)" fill="#000" /></Ti>,
  ],
  [
    <Ti>{docIcon}<path d="M6 6h7M6 8h7M6 10h7M6 12h7M6 14h7" stroke="#333" /></Ti>,
    <Ti><rect x={6} y={1} width={11} height={10} fill="#fff" stroke="#000" /><rect x={2} y={6} width={12} height={11} fill="#808000" stroke="#000" /><rect x={5} y={6} width={6} height={4} fill="#fff" /><rect x={5} y={12} width={6} height={5} fill="#222" /></Ti>,
    <Ti>{docIcon}<path d="M1 9l6-5v3h8v4H7v3z" fill="#00ffff" stroke="#000" /></Ti>,
    <Ti>{docIcon}<path d="M18 9l-6-5v3H4v4h8v3z" fill="#00ffff" stroke="#000" /></Ti>,
    <Ti><rect x={3} y={3} width={6} height={13} fill="#fff" stroke="#000" /><rect x={9} y={1} width={7} height={13} fill="#fff" stroke="#000" /><path d="M9 4v11" stroke="#00f" strokeWidth={2} /></Ti>,
    <Ti><rect x={3} y={3} width={13} height={12} fill="#bbb" stroke="#888" /><path d="M3 3l13 12M16 3L3 15" stroke="#777" strokeWidth={2} /></Ti>,
    <Ti><rect x={3} y={3} width={13} height={12} fill="#fff" stroke="#000" /><path d="M3 3l13 12M16 3L3 15" stroke="#00f" strokeWidth={2} /><path d="M9 1v16" stroke="#00a" /></Ti>,
  ],
  [
    <Ti><path d="M4 2h10v5H4z" fill="#fff" stroke="#000" /><path d="M1 7h17v7H1z" fill="#ccc" stroke="#000" /><path d="M4 12h10v5H4z" fill="#fff" stroke="#000" /></Ti>,
    <Ti><text x={9.5} y={15} fontSize={18} fontWeight="bold" fill="#ffe000" stroke="#000" strokeWidth={.7} textAnchor="middle">?</text></Ti>,
    <Ti><path d="M2 1v13l3-3 3 6 2-1-3-6h4z" fill="#000" /><Tx x={14} y={13} s={15} b c="#000080">?</Tx></Ti>,
  ],
];

const group4: React.ReactNode[] = ['Auto\nGann', 'Auto\nTrend', 'Bias', 'Bol\nBand', 'Donch', 'Mov\nAve', 'Para-\nbolic', 'Pivot', 'Price\nClust', 'Seas-\nonals', "TJ's\nWeb", 'Trade\nProfile'];
const group5 = ['ADX\nDMI', 'CCI', 'Cycles', 'Elliott\nTrig', 'JTI', 'MACD', 'OBV', 'Open\nInt', 'Osc', 'RSI', 'Stoch', 'Time\nClust', 'Vol', 'Money\nflow'];
const intervals = ['1', '5', '10', '15', '30', '60', 'D', 'W', 'M'];
const tabs: [string, number, number, boolean?][] = [['Osc 5,35', 58, 0, true], ['Osc 24,96', 57, 0], ['ADX/DMI 96', 68, 2], ['CCI 96', 41, 4], ['MACD 24, 48, 48', 96, 0]];
const legendMain: [string, string, string][] = [
  ['OP', '28705.000', '#00ffff'], ['HI', '28780.000', '#00ffff'], ['LO', '28655.000', '#00ffff'],
  ['CL', '28710.000', '#00ffff'], ['MA', '28056.667', '#ffff00'], ['MA', '28243.125', '#0000ff'],
];
const dates = ['06/05/23', '06/12/23', '06/19/23', '06/26/23', '07/03/23'];
const menus = ['File', 'Page', 'Chart', 'Tools', 'View', 'Window', 'Help'];

const App = () => (
  <Page>
    <Global />
    <TitleBar>
      <TitleLeft>
        <svg width={21} height={16} viewBox="0 0 21 16">
          <path d="M0 2l5 2 15-3-5 11-15 3z" fill="#1a1ad0" />
          <path d="M1 13l5-5 3 2 5-5 5-3" fill="none" stroke="#e01030" />
        </svg>
        <TitleText>Advanced GET for TS2000i - [FTSEMIB - SPMIB FUTURES, 60]</TitleText>
      </TitleLeft>
      <WinControls>
        <WinBtn $w={37}><svg width={16} height={8} viewBox="0 0 16 8"><rect y={3} width={16} height={4} fill="#fff" /></svg></WinBtn>
        <WinBtn $w={33}><svg width={18} height={16} viewBox="0 0 18 16"><path d="M6 1h11v10h-3M3 5h9v10H3z" fill="none" stroke="#e8eef4" strokeWidth={1.5} /></svg></WinBtn>
        <WinBtn $w={64} $close><svg width={18} height={16} viewBox="0 0 18 16"><path d="M2 1l14 14M16 1L2 15" stroke="#fff" strokeWidth={3.5} /></svg></WinBtn>
      </WinControls>
    </TitleBar>

    <MenuBar>
      <svg width={19} height={20} viewBox="0 0 19 20"><path d="M7 1h3v6h4v3h-4v9H7v-6H3V8h4z" fill="#fff" stroke="#222" strokeWidth={1.4} /></svg>
      <MenuItems>
        {menus.map(m => <MenuItem key={m}><MenuKey>{m[0]}</MenuKey>{m.slice(1)}</MenuItem>)}
      </MenuItems>
      <MdiControls>
        <MdiBtn><svg width={10} height={10} viewBox="0 0 10 10"><path d="M1 8h7" stroke="#5a6a7a" strokeWidth={2} /></svg></MdiBtn>
        <MdiBtn><svg width={10} height={10} viewBox="0 0 10 10"><path d="M3 1h6v5H7M1 4h5v5H1z" fill="none" stroke="#5a6a7a" strokeWidth={1.3} /></svg></MdiBtn>
        <MdiBtn><svg width={10} height={10} viewBox="0 0 10 10"><path d="M2 2l6 6M8 2l-6 6" stroke="#5a6a7a" strokeWidth={1.6} /></svg></MdiBtn>
      </MdiControls>
    </MenuBar>

    <ToolBar>
      {topIcons.map((g, i) => (
        <Group key={i} $ml={i === 0 ? 0 : i === 1 ? 7 : 8}>
          {g.map((ic, j) => <TBtn key={j} $w={23}>{ic}</TBtn>)}
        </Group>
      ))}
      <Sep $ml={5} $mr={6} />
      <Group>
        {group4.map((t, i) => <TBtn key={i} $w={31} $on={t === 'Mov\nAve' || t === 'Pivot'}>{t}</TBtn>)}
        <TBtn $w={31}><Blue>X</Blue>T<Red>L</Red></TBtn>
      </Group>
      <Sep $ml={6} $mr={5} />
      <Group>
        {group5.map((t, i) => <TBtn key={i} $w={31}>{t}</TBtn>)}
      </Group>
      <Sep $ml={6} $mr={7} />
      <Group>
        {intervals.map(t => <NumBtn key={t} $w={23} $on={t === '60'}>{t}</NumBtn>)}
      </Group>
      <Sep $ml={5} />
    </ToolBar>

    <Body>
      <LeftTools>
        {leftIcons.map((ic, i) => (
          <SideBtn key={i} $w={30} $on={i === 1 || i === 4 || i === 12 || i === 16} $mt={i === 17 ? 4 : 0}>{ic}</SideBtn>
        ))}
        <LeftDivider />
      </LeftTools>

      <Center>
        <InfoBar>
          <InfoItem $w={661}>07/13/23</InfoItem>
          <InfoItem $w={141}>O: 28705.000</InfoItem>
          <InfoItem $w={94}>28780.000</InfoItem>
          <InfoItem $w={23}><Red>L:</Red></InfoItem>
          <InfoItem $w={94}>28655.000</InfoItem>
          <span>C: 28710.000</span>
          <InfoEnd>-1.000</InfoEnd>
        </InfoBar>
        <Rule />
        <ChartRow>
          <Plot>
            <MainChart />
            <Legend $w={116}>
              {legendMain.map(([k, v, c], i) => (
                <LegendRow key={i} $c={c}><LegendKey $w={31}>{k}</LegendKey>{v}</LegendRow>
              ))}
            </Legend>
          </Plot>
          <MainAxis />
        </ChartRow>
        <Rule />
        <LowerRow>
          <LowerLeft>
            <OscPlot>
              <OscChart />
              <Legend $w={86}>
                <LegendRow $c="#ffffff" $clear>Osc 5,35</LegendRow>
                <LegendRow $c="#ff00ff">OSC 486</LegendRow>
                <LegendRow $c="#008080"><LegendKey $w={39}>UP</LegendKey>298</LegendRow>
                <LegendRow $c="#008080"><LegendKey $w={39}>DN</LegendKey>-292</LegendRow>
              </Legend>
            </OscPlot>
            <TabRow>
              <ScrollBtn><svg width={7} height={10} viewBox="0 0 7 10"><path d="M6 0v10L0 5z" fill="#000" /></svg></ScrollBtn>
              <ScrollBtn><svg width={7} height={10} viewBox="0 0 7 10"><path d="M1 0v10l6-5z" fill="#000" /></svg></ScrollBtn>
              <TabList>
                {tabs.map(([t, w, pl, on]) => (
                  <Tab key={t} $w={w} $on={on}>
                    <TabShape width={w + 5} height={20} viewBox={`0 0 ${w + 5} 20`}>
                      <polygon points={`0,0 5,19 ${w},19 ${w + 5},0`} fill={on ? '#ffffff' : '#f0f0f0'} stroke="#333" strokeWidth={1} />
                      {on && <line x1={0} x2={w + 5} y1={0} y2={0} stroke="#fff" strokeWidth={2} />}
                    </TabShape>
                    <TabLabel $pl={pl}>{t}</TabLabel>
                  </Tab>
                ))}
              </TabList>
            </TabRow>
          </LowerLeft>
          <AxisCol><OscAxis /></AxisCol>
        </LowerRow>
        <Gap />
        <DateRow>
          <DateBar>
            <DatePad />
            {dates.map(d => <DateCell key={d} $w={225.3}>{d}</DateCell>)}
            <DateCell $w={400}>07/10/23<CursorLabel>07/13/23 - 13:00</CursorLabel></DateCell>
          </DateBar>
          <DateEnd />
        </DateRow>
      </Center>

      <RightTools>
        {rightIcons.map((ic, i) => (
          <SideBtn key={i} $w={23} $on={i === 0} $mt={i === 15 ? 5 : i === 19 ? 6 : 0}>{ic}</SideBtn>
        ))}
      </RightTools>
    </Body>

    <StatusRow>
      <StatusPanel>Page: 1 - FTSEMIB B</StatusPanel>
    </StatusRow>
    <BottomStrip />
  </Page>
);

export default App;
